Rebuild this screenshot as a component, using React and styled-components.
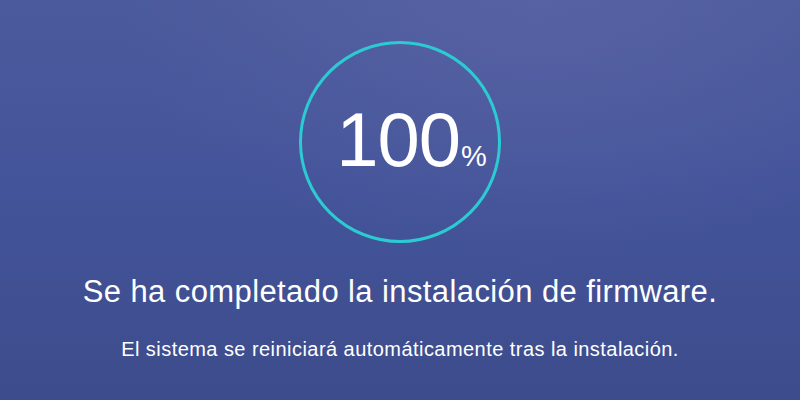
import React from "react";
import styled, { createGlobalStyle } from "styled-components";

const Global = createGlobalStyle`
  html, body { margin: 0; padding: 0; }
  body { font-family: "Liberation Sans", Arial, sans-serif; }
`;

const Screen = styled.div`
  width: 800px;
  height: 400px;
  box-sizing: border-box;
  padding-top: 41px;
  display: flex;
  flex-direction: column;
  align-items: center;
  color: #ffffff;
  background:
    radial-gradient(ellipse 420px 260px at 540px 0px, rgba(96, 104, 168, 0.55), rgba(96, 104, 168, 0) 100%),
    linear-gradient(180deg, #4b5a9c 0%, #44549a 45%, #3c4c8c 100%);
  overflow: hidden;
`;

const Ring = styled.div`
  width: 202px;
  height: 202px;
  box-sizing: border-box;
  border: 3.5px solid #2ccbd3;
  border-radius: 50%;
  display: flex;
  align-items: center;
  justify-content: center;
`;

const Value = styled.div`
  display: flex;
  align-items: baseline;
  margin-left: 23px;
  margin-top: -4px;
`;

const Number = styled.span`
  font-size: 76px;
  line-height: 1;
  letter-spacing: -1px;
`;

const Unit = styled.span`
  font-size: 29px;
  line-height: 1;
  margin-left: 1px;
`;

const Title = styled.h1`
  margin: 31px 0 0;
  font-size: 31px;
  font-weight: normal;
  line-height: 36px;
  letter-spacing: 0.4px;
`;

const Note = styled.p`
  margin: 27px 0 0;
  font-size: 20px;
  line-height: 24px;
  letter-spacing: 0.45px;
`;

export default function App() {
  return (
    <>
      <Global />
      <Screen>
        <Ring>
          <Value>
            <Number>100</Number>
            <Unit>%</Unit>
          </Value>
        </Ring>
        <Title>Se ha completado la instalación de firmware.</Title>
        <Note>El sistema se reiniciará automáticamente tras la instalación.</Note>
      </Screen>
    </>
  );
}
